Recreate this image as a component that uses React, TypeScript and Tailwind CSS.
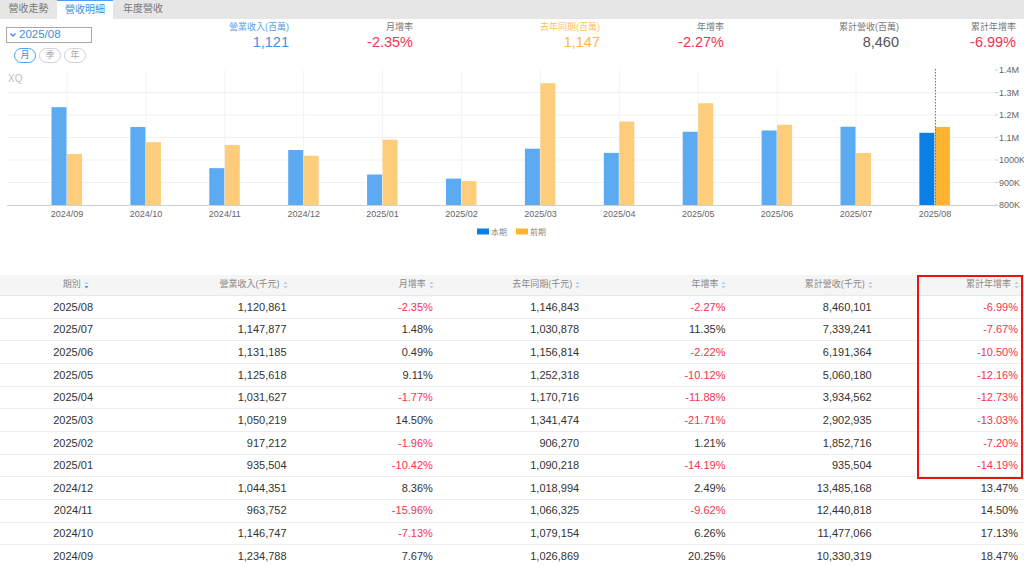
import React from 'react'

const FONT = "'Liberation Sans', 'Noto Sans CJK TC', Arial, sans-serif"

const rows: string[][] = [
  ['2025/08', '1,120,861', '-2.35%', '1,146,843', '-2.27%', '8,460,101', '-6.99%'],
  ['2025/07', '1,147,877', '1.48%', '1,030,878', '11.35%', '7,339,241', '-7.67%'],
  ['2025/06', '1,131,185', '0.49%', '1,156,814', '-2.22%', '6,191,364', '-10.50%'],
  ['2025/05', '1,125,618', '9.11%', '1,252,318', '-10.12%', '5,060,180', '-12.16%'],
  ['2025/04', '1,031,627', '-1.77%', '1,170,716', '-11.88%', '3,934,562', '-12.73%'],
  ['2025/03', '1,050,219', '14.50%', '1,341,474', '-21.71%', '2,902,935', '-13.03%'],
  ['2025/02', '917,212', '-1.96%', '906,270', '1.21%', '1,852,716', '-7.20%'],
  ['2025/01', '935,504', '-10.42%', '1,090,218', '-14.19%', '935,504', '-14.19%'],
  ['2024/12', '1,044,351', '8.36%', '1,018,994', '2.49%', '13,485,168', '13.47%'],
  ['2024/11', '963,752', '-15.96%', '1,066,325', '-9.62%', '12,440,818', '14.50%'],
  ['2024/10', '1,146,747', '-7.13%', '1,079,154', '6.26%', '11,477,066', '17.13%'],
  ['2024/09', '1,234,788', '7.67%', '1,026,869', '20.25%', '10,330,319', '18.47%'],
]

const headers = ['期別', '營業收入(千元)', '月增率', '去年同期(千元)', '年增率', '累計營收(千元)', '累計年增率']

const num = (s: string) => parseInt(s.replace(/,/g, ''), 10)

function SortIcon({ active }: { active?: boolean }) {
  return (
    <svg width="5" height="8" viewBox="0 0 5 8" className="ml-[3px]">
      <path d="M2.5 0.5 L4.5 3 L0.5 3 Z" fill="#b9cde0" />
      <path d="M2.5 7.5 L4.5 5 L0.5 5 Z" fill={active ? '#3d8fe0' : '#b9cde0'} />
    </svg>
  )
}

function Chart() {
  const data = [...rows].reverse()
  const base = 205
  const step = 22.5
  const y = (v: number) => base - ((v - 800000) / 100000) * step
  const ticks = ['800K', '900K', '1000K', '1.1M', '1.2M', '1.3M', '1.4M']
  return (
    <svg width="1024" height="175" viewBox="0 65 1024 175" style={{ fontFamily: FONT }}>
      <text x="8" y="82" fontSize="10" fill="#bdbdbd">XQ</text>
      {ticks.map((t, k) => (
        <g key={t}>
          {k > 0 && k < 6 && <line x1="7" x2="995" y1={base - k * step} y2={base - k * step} stroke="#f1f1f1" strokeWidth="1" />}
          <line x1="995" x2="998" y1={base - k * step} y2={base - k * step} stroke="#ccc" strokeWidth="1" />
          <text x="999" y={base - k * step + 3} fontSize="9" fill="#666">{t}</text>
        </g>
      ))}
      {data.map((r, i) => {
        const c = 67 + i * 78.9
        return <line key={'v' + i} x1={c} x2={c} y1={70} y2={base} stroke="#f3f3f3" strokeWidth="1" />
      })}
      <line x1="7" x2="997" y1={base + 0.5} y2={base + 0.5} stroke="#d0d0d0" strokeWidth="1" />
      {data.map((r, i) => {
        const c = 67 + i * 78.9
        const last = i === data.length - 1
        const a = num(r[1])
        const b = num(r[3])
        return (
          <g key={r[0]}>
            <rect x={c - 15.5} y={y(a)} width="15" height={base - y(a)} fill={last ? '#0b7fe6' : '#5caaf1'} />
            <rect x={c} y={y(b)} width="15" height={base - y(b)} fill={last ? '#ffb32f' : '#fecd7c'} />
            <text x={c} y="217" fontSize="9" fill="#666" textAnchor="middle">{r[0]}</text>
          </g>
        )
      })}
      <line x1="935.5" x2="935.5" y1="69" y2={base} stroke="#777" strokeWidth="1" strokeDasharray="1.5 1.5" />
      <rect x="477" y="228.5" width="12" height="6" fill="#0b7fe6" />
      <text x="491" y="234.5" fontSize="8" fill="#888">本期</text>
      <rect x="516" y="228.5" width="12" height="6" fill="#ffb32f" />
      <text x="530" y="234.5" fontSize="8" fill="#888">前期</text>
    </svg>
  )
}

function Stat({ label, value, w, labelColor, valueColor }: { label: string; value: string; w: string; labelColor: string; valueColor: string }) {
  return (
    <div className={`flex flex-col items-end ${w}`}>
      <div className={`text-[9px] leading-[12px] ${labelColor}`}>{label}</div>
      <div className={`text-[14.5px] leading-[16px] mt-[1px] ${valueColor}`}>{value}</div>
    </div>
  )
}

export default function App() {
  const red = 'text-[#f4324f]'
  return (
    <div className="w-[1024px] h-[567px] overflow-hidden bg-white relative" style={{ fontFamily: FONT }}>
      {/* tabs */}
      <div className="flex h-[19px] bg-[#e6e6e6] text-[10px] leading-[18px]">
        <div className="w-[57px] text-center text-[#777]">營收走勢</div>
        <div className="w-[56px] text-center text-[#3a8ee6] bg-white border-t border-[#4a9ff5]">營收明細</div>
        <div className="w-[60px] text-center text-[#777]">年度營收</div>
      </div>

      {/* header */}
      <div className="flex h-[46px]">
        <div className="w-[200px] pt-[8px] pl-[6px]">
          <div className="w-[86px] h-[16px] border border-[#a8a8a8] flex items-center pl-[3px] text-[#3a8ee6] text-[11.5px]">
            <svg width="6" height="4" viewBox="0 0 6 4" className="mr-[3px]">
              <path d="M0.5 0.5 L3 3 L5.5 0.5" stroke="#3a8ee6" strokeWidth="1.3" fill="none" />
            </svg>
            2025/08
          </div>
          <div className="flex gap-[3px] pl-[8px] mt-[5px]">
            <div className="w-[22px] h-[15px] rounded-full border border-[#4a9ff5] text-[#3a8ee6] text-[9px] leading-[13px] text-center">月</div>
            <div className="w-[22px] h-[15px] rounded-full border border-[#cfcfcf] text-[#aaa] text-[9px] leading-[13px] text-center">季</div>
            <div className="w-[22px] h-[15px] rounded-full border border-[#cfcfcf] text-[#aaa] text-[9px] leading-[13px] text-center">年</div>
          </div>
        </div>
        <div className="flex pt-[2px]">
          <Stat w="w-[89px]" label="營業收入(百萬)" value="1,121" labelColor="text-[#5a9fe8]" valueColor="text-[#3d8fe8]" />
          <Stat w="w-[124px]" label="月增率" value="-2.35%" labelColor="text-[#777]" valueColor={red} />
          <Stat w="w-[187px]" label="去年同期(百萬)" value="1,147" labelColor="text-[#ffbf5e]" valueColor="text-[#ffb647]" />
          <Stat w="w-[124px]" label="年增率" value="-2.27%" labelColor="text-[#777]" valueColor={red} />
          <Stat w="w-[175px]" label="累計營收(百萬)" value="8,460" labelColor="text-[#777]" valueColor="text-[#555]" />
          <Stat w="w-[117px]" label="累計年增率" value="-6.99%" labelColor="text-[#777]" valueColor={red} />
        </div>
      </div>

      <Chart />

      {/* table */}
      <div className="mt-[35px]">
        <div className="grid grid-cols-7 h-[21px] bg-[#f5f5f5] border-b border-[#e8e8e8] text-[9px] text-[#888]">
          {headers.map((h, i) => (
            <div key={h} className={`flex items-center ${i === 0 ? 'justify-center pl-[5px]' : 'justify-end pr-[5px]'}`}>
              {h}
              <SortIcon active={i === 0} />
            </div>
          ))}
        </div>
        {rows.map((r) => (
          <div key={r[0]} className="grid grid-cols-7 h-[22.67px] border-b border-[#ececec] text-[11px] text-[#333] items-center">
            {r.map((v, i) => (
              <div key={i} className={`${i === 0 ? 'text-center' : 'text-right pr-[6px]'} ${v.startsWith('-') ? red : ''}`}>{v}</div>
            ))}
          </div>
        ))}
      </div>

      {/* annotation */}
      <div className="absolute left-[917px] top-[275px] w-[106px] h-[204px] border-2 border-[#ee1111] pointer-events-none" />
    </div>
  )
}
